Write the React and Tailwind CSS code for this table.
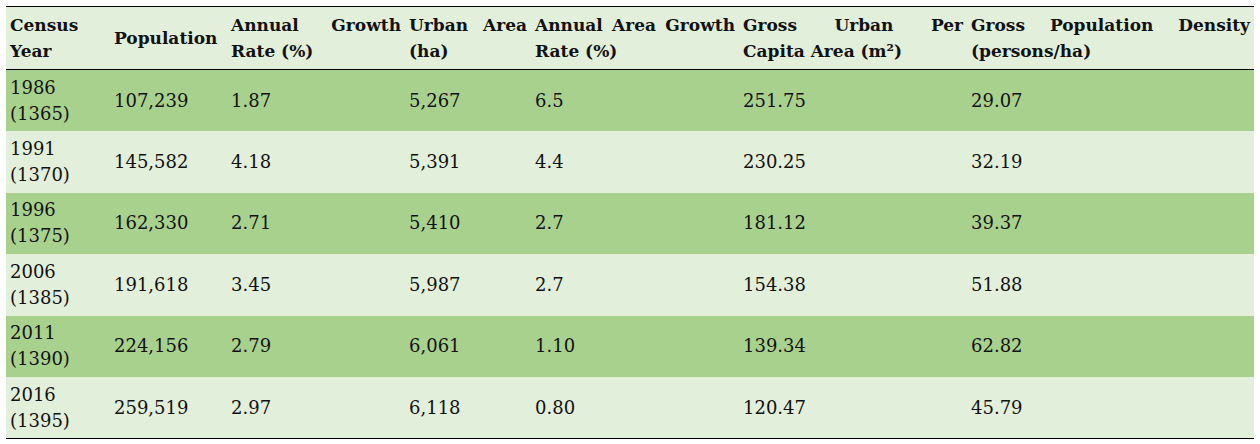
const headers = [
  'Census Year',
  'Population',
  'Annual Growth Rate (%)',
  'Urban Area (ha)',
  'Annual Area Growth Rate (%)',
  'Gross Urban Per Capita Area (m²)',
  'Gross Population Density (persons/ha)',
]

const widths = ['w-[104px]', 'w-[117px]', 'w-[178px]', 'w-[126px]', 'w-[208px]', 'w-[228px]', '']

const rows = [
  ['1986', '(1365)', '107,239', '1.87', '5,267', '6.5', '251.75', '29.07'],
  ['1991', '(1370)', '145,582', '4.18', '5,391', '4.4', '230.25', '32.19'],
  ['1996', '(1375)', '162,330', '2.71', '5,410', '2.7', '181.12', '39.37'],
  ['2006', '(1385)', '191,618', '3.45', '5,987', '2.7', '154.38', '51.88'],
  ['2011', '(1390)', '224,156', '2.79', '6,061', '1.10', '139.34', '62.82'],
  ['2016', '(1395)', '259,519', '2.97', '6,118', '0.80', '120.47', '45.79'],
]

export default function App() {
  return (
    <div className="bg-white h-[444px] pt-[6px] px-[6px] font-['DejaVu_Serif',serif] text-[18px] leading-[26px] text-[#111]">
      <table className="w-[1248px] border-collapse table-fixed border-t border-b border-black">
        <thead>
          <tr className="bg-[#e2efda] border-b border-black h-[63px]">
            {headers.map((h, i) => (
              <th
                key={i}
                className={`${widths[i]} px-[4px] py-[4px] align-middle text-justify font-bold text-[17px]`}
              >
                {h}
              </th>
            ))}
          </tr>
        </thead>
        <tbody>
          {rows.map((r, i) => (
            <tr key={r[0]} className={`h-[61.5px] ${i % 2 === 0 ? 'bg-[#a9d18e]' : 'bg-[#e2efda]'}`}>
              <td className="px-[4px] py-[4px] align-middle">
                {r[0]}
                <br />
                {r[1]}
              </td>
              {r.slice(2).map((v, j) => (
                <td key={j} className="px-[4px] py-[4px] align-middle">
                  {v}
                </td>
              ))}
            </tr>
          ))}
        </tbody>
      </table>
    </div>
  )
}
